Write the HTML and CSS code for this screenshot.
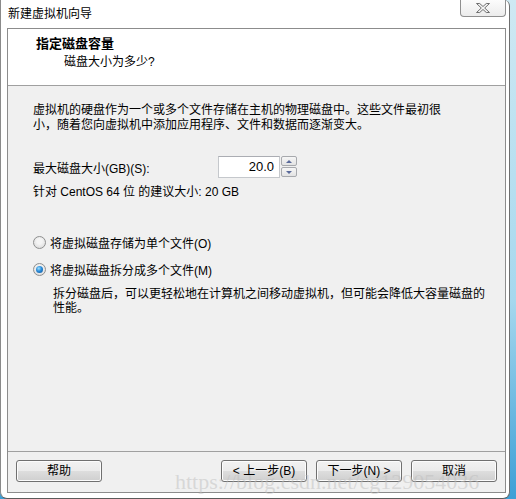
FILE: index.html
```html
<!DOCTYPE html>
<html lang="zh-CN">
<head>
    <meta charset="UTF-8">
    <title>新建虚拟机向导</title>
    <link rel="stylesheet" href="styles.css">
</head>
<body>
    <div class="window">
        <div class="titlebar">
            <span class="title">新建虚拟机向导</span>
            <div class="close">
                <svg width="16" height="12" viewBox="0 0 16 12">
                    <path d="M1.5 1.5h3.2l3.3 3 3.3-3h3.2l-4.8 4.5 4.8 4.5h-3.2l-3.3-3-3.3 3h-3.2l4.8-4.5z" fill="#f4f4f4" stroke="#6f6f6f" stroke-width="1" stroke-linejoin="round"/>
                </svg>
            </div>
        </div>

        <div class="client">
            <div class="header">
                <div class="header-title">指定磁盘容量</div>
                <div class="header-sub">磁盘大小为多少?</div>
            </div>

            <div class="content">
                <p class="intro">虚拟机的硬盘作为一个或多个文件存储在主机的物理磁盘中。这些文件最初很小，随着您向虚拟机中添加应用程序、文件和数据而逐渐变大。</p>

                <div class="size-row">
                    <label class="size-label">最大磁盘大小(GB)(S):</label>
                    <div class="spinner">
                        <div class="spin-value">20.0</div>
                        <div class="spin-buttons">
                            <div class="spin-btn"><span class="arrow-up"></span></div>
                            <div class="spin-btn"><span class="arrow-down"></span></div>
                        </div>
                    </div>
                </div>

                <div class="hint">针对 CentOS 64 位 的建议大小: 20 GB</div>

                <div class="option first">
                    <span class="radio"></span>
                    <span>将虚拟磁盘存储为单个文件(O)</span>
                </div>
                <div class="option">
                    <span class="radio checked"></span>
                    <span>将虚拟磁盘拆分成多个文件(M)</span>
                </div>
                <p class="option-desc">拆分磁盘后，可以更轻松地在计算机之间移动虚拟机，但可能会降低大容量磁盘的性能。</p>
            </div>

            <div class="footer">
                <div class="button">帮助</div>
                <div class="spacer"></div>
                <div class="button">&lt; 上一步(B)</div>
                <div class="button">下一步(N) &gt;</div>
                <div class="button">取消</div>
            </div>
        </div>
    </div>

    <div class="watermark">https://blog.csdn.net/cg129054036</div>
</body>
</html>
```

FILE: styles.css
```css
html, body {
    margin: 0;
    padding: 0;
}

body {
    width: 516px;
    height: 499px;
    overflow: hidden;
    position: relative;
    background: linear-gradient(#cfe9f3, #a6d8ee 60%, #3c9fd6);
    font-family: "Liberation Sans", "Noto Sans CJK SC", sans-serif;
    font-size: 12px;
    color: #000;
}

.window {
    box-sizing: border-box;
    width: 510px;
    height: 499px;
    background: #fff;
    border-left: 1px solid #8a8a8a;
    border-right: 1px solid #6f6f6f;
    border-bottom: 1px solid #5a5a5a;
    border-radius: 0 6px 7px 7px;
    padding: 0 3px 5px 6px;
}

.titlebar {
    height: 28px;
    display: flex;
    align-items: flex-start;
    justify-content: space-between;
}

.title {
    margin-top: 6px;
    margin-left: 1px;
    line-height: 16px;
}

.close {
    width: 46px;
    height: 18px;
    margin-top: -1px;
    box-sizing: border-box;
    border: 1px solid #8f8f8f;
    border-top: none;
    border-radius: 0 0 4px 4px;
    background: linear-gradient(#fdfdfd, #ececec);
    display: flex;
    align-items: center;
    justify-content: center;
}

.client {
    box-sizing: border-box;
    width: 499px;
    height: 465px;
    border: 1px solid #8c8c8c;
    background: #f0f0f0;
    display: flex;
    flex-direction: column;
}

.header {
    background: #fff;
    border-bottom: 1px solid #a0a0a0;
    padding-top: 7px;
    height: 49px;
}

.header-title {
    font-weight: bold;
    font-size: 13px;
    line-height: 16px;
    padding-left: 28px;
}

.header-sub {
    line-height: 16px;
    margin-top: 2px;
    padding-left: 56px;
}

.content {
    height: 365px;
    box-sizing: border-box;
    padding: 17px 0 0 25px;
}

.intro {
    margin: 0;
    width: 414px;
    line-height: 15px;
}

.size-row {
    display: flex;
    align-items: center;
    margin-top: 23px;
}

.size-label {
    width: 185px;
}

.spinner {
    display: flex;
    height: 22px;
}

.spin-value {
    box-sizing: border-box;
    width: 62px;
    height: 22px;
    background: #fff;
    border: 1px solid #c5c8cc;
    border-top-color: #abadb3;
    text-align: right;
    padding-right: 5px;
    font-size: 13px;
    line-height: 20px;
}

.spin-buttons {
    display: flex;
    flex-direction: column;
    gap: 1px;
    margin-left: 1px;
}

.spin-btn {
    box-sizing: border-box;
    width: 16px;
    height: 10px;
    border: 1px solid #a7a9ad;
    border-radius: 2px;
    background: linear-gradient(#f6f6f6, #e3e3e3);
    display: flex;
    align-items: center;
    justify-content: center;
}

.arrow-up, .arrow-down {
    width: 0;
    height: 0;
    border-left: 3px solid transparent;
    border-right: 3px solid transparent;
}

.arrow-up {
    border-bottom: 3px solid #5a6a9a;
}

.arrow-down {
    border-top: 3px solid #5a6a9a;
}

.hint {
    margin-top: 7px;
    line-height: 15px;
}

.option {
    display: flex;
    align-items: center;
    gap: 4px;
    height: 18px;
    margin-top: 9px;
}

.option.first {
    margin-top: 33px;
}

.radio {
    box-sizing: border-box;
    width: 13px;
    height: 13px;
    border-radius: 50%;
    border: 1px solid #8e8f8f;
    background: radial-gradient(circle at 50% 40%, #f4f4f4 30%, #d4d4d4 100%);
    display: flex;
    align-items: center;
    justify-content: center;
}

.radio.checked::after {
    content: "";
    width: 7px;
    height: 7px;
    border-radius: 50%;
    background: radial-gradient(circle at 40% 35%, #9fe1ff 0%, #2a8bd8 45%, #0b4f96 100%);
}

.option-desc {
    margin: 9px 0 0 20px;
    width: 438px;
    line-height: 14px;
}

.footer {
    border-top: 1px solid #a0a0a0;
    flex: 1;
    display: flex;
    align-items: flex-start;
    padding: 8px 8px 0 8px;
    gap: 9px;
}

.spacer {
    flex: 1;
}

.button {
    box-sizing: border-box;
    width: 86px;
    height: 22px;
    border: 1px solid #707070;
    border-radius: 3px;
    background: linear-gradient(#f2f2f2 0%, #ebebeb 50%, #dddddd 51%, #cfcfcf 100%);
    box-shadow: inset 0 0 0 1px #fcfcfc;
    text-align: center;
    line-height: 20px;
}

.watermark {
    position: absolute;
    left: 175px;
    top: 469px;
    font-family: "Liberation Serif", serif;
    font-size: 22px;
    color: rgba(190, 190, 190, 0.5);
    white-space: nowrap;
    pointer-events: none;
}
```
